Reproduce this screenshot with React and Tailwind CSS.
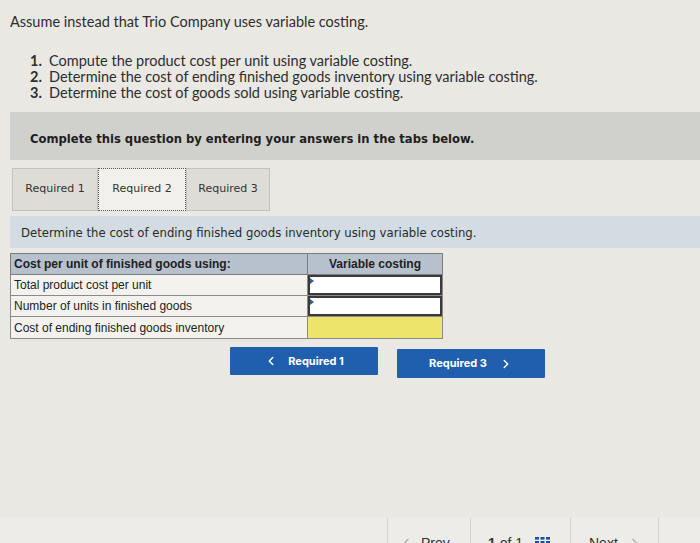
import { ChevronLeft, ChevronRight } from "lucide-react";

const rows = [
  { label: "Total product cost per unit", kind: "input" },
  { label: "Number of units in finished goods", kind: "input" },
  { label: "Cost of ending finished goods inventory", kind: "total" },
];

export default function App() {
  return (
    <div className="h-[543px] w-[700px] overflow-hidden bg-[#e9e8e3] text-[#2b2b2b] relative">
      <div className="pt-[13px] pl-[10px] font-['Lato',sans-serif] text-[14.5px] text-[#2e2e2e]">
        <p className="leading-[18px]">Assume instead that Trio Company uses variable costing.</p>
        <ol className="mt-[22px] pl-[20px] leading-[16px]">
          <li className="flex gap-[6px]"><span className="font-bold w-[13px]">1.</span>Compute the product cost per unit using variable costing.</li>
          <li className="flex gap-[6px]"><span className="font-bold w-[13px]">2.</span>Determine the cost of ending finished goods inventory using variable costing.</li>
          <li className="flex gap-[6px]"><span className="font-bold w-[13px]">3.</span>Determine the cost of goods sold using variable costing.</li>
        </ol>
      </div>

      <div className="mt-[11px] ml-[10px] h-[48px] bg-[#d0d0cc] flex items-center pt-[8px] pl-[20px] font-['DejaVu_Sans',sans-serif] text-[11.6px] font-bold text-[#1e1e1e]">
        Complete this question by entering your answers in the tabs below.
      </div>

      <div className="mt-[8px] ml-[12px] flex font-['DejaVu_Sans',sans-serif] text-[11px] text-[#333]">
        <div className="h-[43px] w-[86px] bg-[#dedcd7] border border-[#c2c1bc] flex items-center justify-center">Required 1</div>
        <div className="h-[43px] w-[88px] bg-[#f1f0ec] border border-dotted border-[#555] flex items-center justify-center">Required 2</div>
        <div className="h-[43px] w-[84px] bg-[#dedcd7] border border-[#c2c1bc] flex items-center justify-center">Required 3</div>
      </div>

      <div className="mt-[5px] ml-[10px] h-[32px] bg-[#d2dce2] flex items-center pt-[3px] pl-[11px] font-['DejaVu_Sans',sans-serif] text-[11.7px] text-[#2a2a2a]">
        Determine the cost of ending finished goods inventory using variable costing.
      </div>

      <table className="mt-[5px] ml-[10px] w-[433px] border-collapse font-['Liberation_Sans',sans-serif] text-[12px] text-[#222]">
        <thead>
          <tr className="h-[21px] bg-[#b7c1cd]">
            <th className="w-[297px] border border-[#7d7d7d] text-left pl-[3px] font-bold">Cost per unit of finished goods using:</th>
            <th className="border border-[#7d7d7d] text-center font-bold">Variable costing</th>
          </tr>
        </thead>
        <tbody>
          {rows.map((r) => (
            <tr key={r.label} className="h-[20px] bg-[#f3f2ee]">
              <td className="border border-[#8a8a8a] pl-[3px]">{r.label}</td>
              <td className="border border-[#8a8a8a] p-0 relative">
                {r.kind === "input" ? (
                  <div className="h-[20px] bg-white border-2 border-[#3a3a3a] relative">
                    <span className="absolute left-0 top-[1px] w-0 h-0 border-y-[3px] border-y-transparent border-l-[4px] border-l-[#2f5d9b]" />
                  </div>
                ) : (
                  <div className="h-[21px] bg-[#ede46c]" />
                )}
              </td>
            </tr>
          ))}
        </tbody>
      </table>

      <div className="mt-[8px] ml-[230px] flex gap-[19px] font-['Inter',sans-serif] text-[11px] font-bold text-white">
        <button className="h-[28px] w-[148px] bg-[#1f5fae] rounded-[1px] flex items-center justify-center gap-[10px]">
          <ChevronLeft size={14} strokeWidth={2.5} />
          <span>Required 1</span>
        </button>
        <button className="mt-[2px] h-[29px] w-[148px] bg-[#1f5fae] rounded-[1px] flex items-center justify-center gap-[12px]">
          <span>Required 3</span>
          <ChevronRight size={14} strokeWidth={2.5} />
        </button>
      </div>

      <div className="absolute left-0 top-[518px] w-full h-[40px] bg-[#edece8] flex font-['Liberation_Sans',sans-serif] text-[14px] text-[#333]">
        <div className="w-[387px]" />
        <div className="w-[83px] border-l border-[#d4d3cf] flex items-start pt-[15px] pl-[12px] gap-[8px]">
          <ChevronLeft size={13} className="text-[#aaa] mt-[3px]" />
          <span>Prev</span>
        </div>
        <div className="w-[100px] border-l border-[#d4d3cf] flex items-start pt-[15px] pl-[17px] gap-[12px]">
          <span><b>1</b> of 1</span>
          <svg width="15" height="10" viewBox="0 0 15 10" className="mt-[4px]">
            {[0, 5.5, 11].map((x) =>
              [0, 4, 8].map((y) => <rect key={x + "-" + y} x={x} y={y} width="4" height="2.6" fill="#1f4fa0" />)
            )}
          </svg>
        </div>
        <div className="w-[88px] border-l border-[#d4d3cf] flex items-start pt-[15px] pl-[18px] gap-[10px]">
          <span>Next</span>
          <ChevronRight size={13} className="text-[#aaa] mt-[3px]" />
        </div>
        <div className="flex-1 border-l border-[#d4d3cf]" />
      </div>
    </div>
  );
}
